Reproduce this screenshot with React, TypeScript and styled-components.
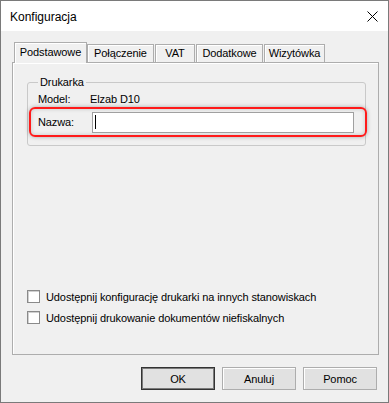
import styled, { createGlobalStyle } from 'styled-components';

const GlobalStyle = createGlobalStyle`
  html, body {
    margin: 0;
    padding: 0;
    background: #ffffff;
  }
  * {
    box-sizing: border-box;
  }
`;

const Window = styled.div`
  width: 389px;
  height: 403px;
  border: 1px solid #7a7a7a;
  background: #f0f0f0;
  display: flex;
  flex-direction: column;
  font-family: 'Liberation Sans', Arial, sans-serif;
  font-size: 11px;
  letter-spacing: -0.1px;
  color: #000000;
`;

const TitleBar = styled.div`
  height: 30px;
  background: #ffffff;
  display: flex;
  align-items: center;
  justify-content: space-between;
  padding: 0 9px 0 9px;
  font-size: 12px;
  letter-spacing: 0;
`;

const Title = styled.span`
  padding-top: 1px;
`;

const CloseIcon = styled.svg`
  width: 11px;
  height: 11px;
  margin-right: 1px;
`;

const Body = styled.div`
  flex: 1;
  display: flex;
  flex-direction: column;
  padding: 11px 9px 0 11px;
`;

const TabStrip = styled.div`
  display: flex;
  align-items: flex-end;
  height: 20px;
  padding-left: 2px;
  position: relative;
  z-index: 1;
`;

const Tab = styled.div<{ $w: number; $active?: boolean }>`
  width: ${(p) => p.$w}px;
  height: ${(p) => (p.$active ? 21 : 18)}px;
  margin-bottom: ${(p) => (p.$active ? -1 : 0)}px;
  margin-right: ${(p) => (p.$active ? 0 : 1)}px;
  border: 1px solid #adadad;
  border-bottom: none;
  background: #f0f0f0;
  box-shadow: inset 1px 1px 0 #ffffff;
  display: flex;
  justify-content: center;
  padding-top: ${(p) => (p.$active ? 3 : 2)}px;
  white-space: nowrap;
`;

const Panel = styled.div`
  height: 293px;
  border: 1px solid #adadad;
  box-shadow: inset 1px 1px 0 #ffffff;
  display: flex;
  flex-direction: column;
  padding: 13px 12px 28px 14px;
`;

const GroupBox = styled.fieldset`
  margin: 0;
  padding: 0 0 8px 0;
  border: 1px solid #c9c9c9;
  border-radius: 3px;
  display: flex;
  flex-direction: column;
`;

const Legend = styled.legend`
  margin-left: 10px;
  padding: 0 2px;
  line-height: 13px;
`;

const FieldRow = styled.div`
  display: flex;
  align-items: center;
  height: 13px;
  margin-top: 3px;
  padding-left: 10px;
`;

const FieldLabel = styled.span`
  width: 52px;
`;

const Highlight = styled.div`
  margin: 2px -2px 0 1px;
  height: 30px;
  border: 2px solid #ff1a1a;
  border-radius: 6px;
  box-shadow: 0 0 4px rgba(0, 0, 0, 0.3), inset 0 0 4px rgba(0, 0, 0, 0.18);
  display: flex;
  align-items: center;
  padding: 0 11px 0 7px;
`;

const InputLabel = styled.span`
  width: 54px;
`;

const TextInput = styled.div`
  flex: 1;
  height: 21px;
  background: #ffffff;
  border: 1px solid #a0a0a0;
  display: flex;
  align-items: center;
  padding-left: 2px;
`;

const Caret = styled.span`
  width: 1px;
  height: 14px;
  background: #000000;
`;

const CheckList = styled.div`
  margin-top: auto;
  display: flex;
  flex-direction: column;
  gap: 4px;
`;

const CheckRow = styled.label`
  display: flex;
  align-items: center;
  height: 17px;
  gap: 6px;
`;

const CheckBox = styled.span`
  width: 13px;
  height: 13px;
  border: 1px solid #8a8a8a;
  background: #ffffff;
  box-shadow: inset 1px 1px 0 #d0d0d0;
`;

const ButtonRow = styled.div`
  display: flex;
  justify-content: flex-end;
  gap: 7px;
  margin-top: 12px;
  padding-right: 2px;
`;

const Button = styled.button<{ $default?: boolean }>`
  width: 74px;
  height: 23px;
  font: inherit;
  letter-spacing: inherit;
  color: #000000;
  background: #e1e1e1;
  border: 1px solid ${(p) => (p.$default ? '#333333' : '#adadad')};
  box-shadow: ${(p) => (p.$default ? 'inset 0 0 0 1px #7a7a7a' : 'inset 1px 1px 0 #ffffff')};
  padding: 0;
`;

const tabs = [
  { label: 'Podstawowe', w: 73 },
  { label: 'Połączenie', w: 67 },
  { label: 'VAT', w: 40 },
  { label: 'Dodatkowe', w: 67 },
  { label: 'Wizytówka', w: 61 },
];

export default function App() {
  return (
    <>
      <GlobalStyle />
      <Window>
        <TitleBar>
          <Title>Konfiguracja</Title>
          <CloseIcon viewBox="0 0 11 11">
            <path d="M0.5 0.5 L10.5 10.5 M10.5 0.5 L0.5 10.5" stroke="#000" strokeWidth="1" />
          </CloseIcon>
        </TitleBar>
        <Body>
          <TabStrip>
            {tabs.map((t, i) => (
              <Tab key={t.label} $w={t.w} $active={i === 0}>
                {t.label}
              </Tab>
            ))}
          </TabStrip>
          <Panel>
            <GroupBox>
              <Legend>Drukarka</Legend>
              <FieldRow>
                <FieldLabel>Model:</FieldLabel>
                <span>Elzab D10</span>
              </FieldRow>
              <Highlight>
                <InputLabel>Nazwa:</InputLabel>
                <TextInput>
                  <Caret />
                </TextInput>
              </Highlight>
            </GroupBox>
            <CheckList>
              <CheckRow>
                <CheckBox />
                Udostępnij konfigurację drukarki na innych stanowiskach
              </CheckRow>
              <CheckRow>
                <CheckBox />
                Udostępnij drukowanie dokumentów niefiskalnych
              </CheckRow>
            </CheckList>
          </Panel>
          <ButtonRow>
            <Button $default>OK</Button>
            <Button>Anuluj</Button>
            <Button>Pomoc</Button>
          </ButtonRow>
        </Body>
      </Window>
    </>
  );
}
